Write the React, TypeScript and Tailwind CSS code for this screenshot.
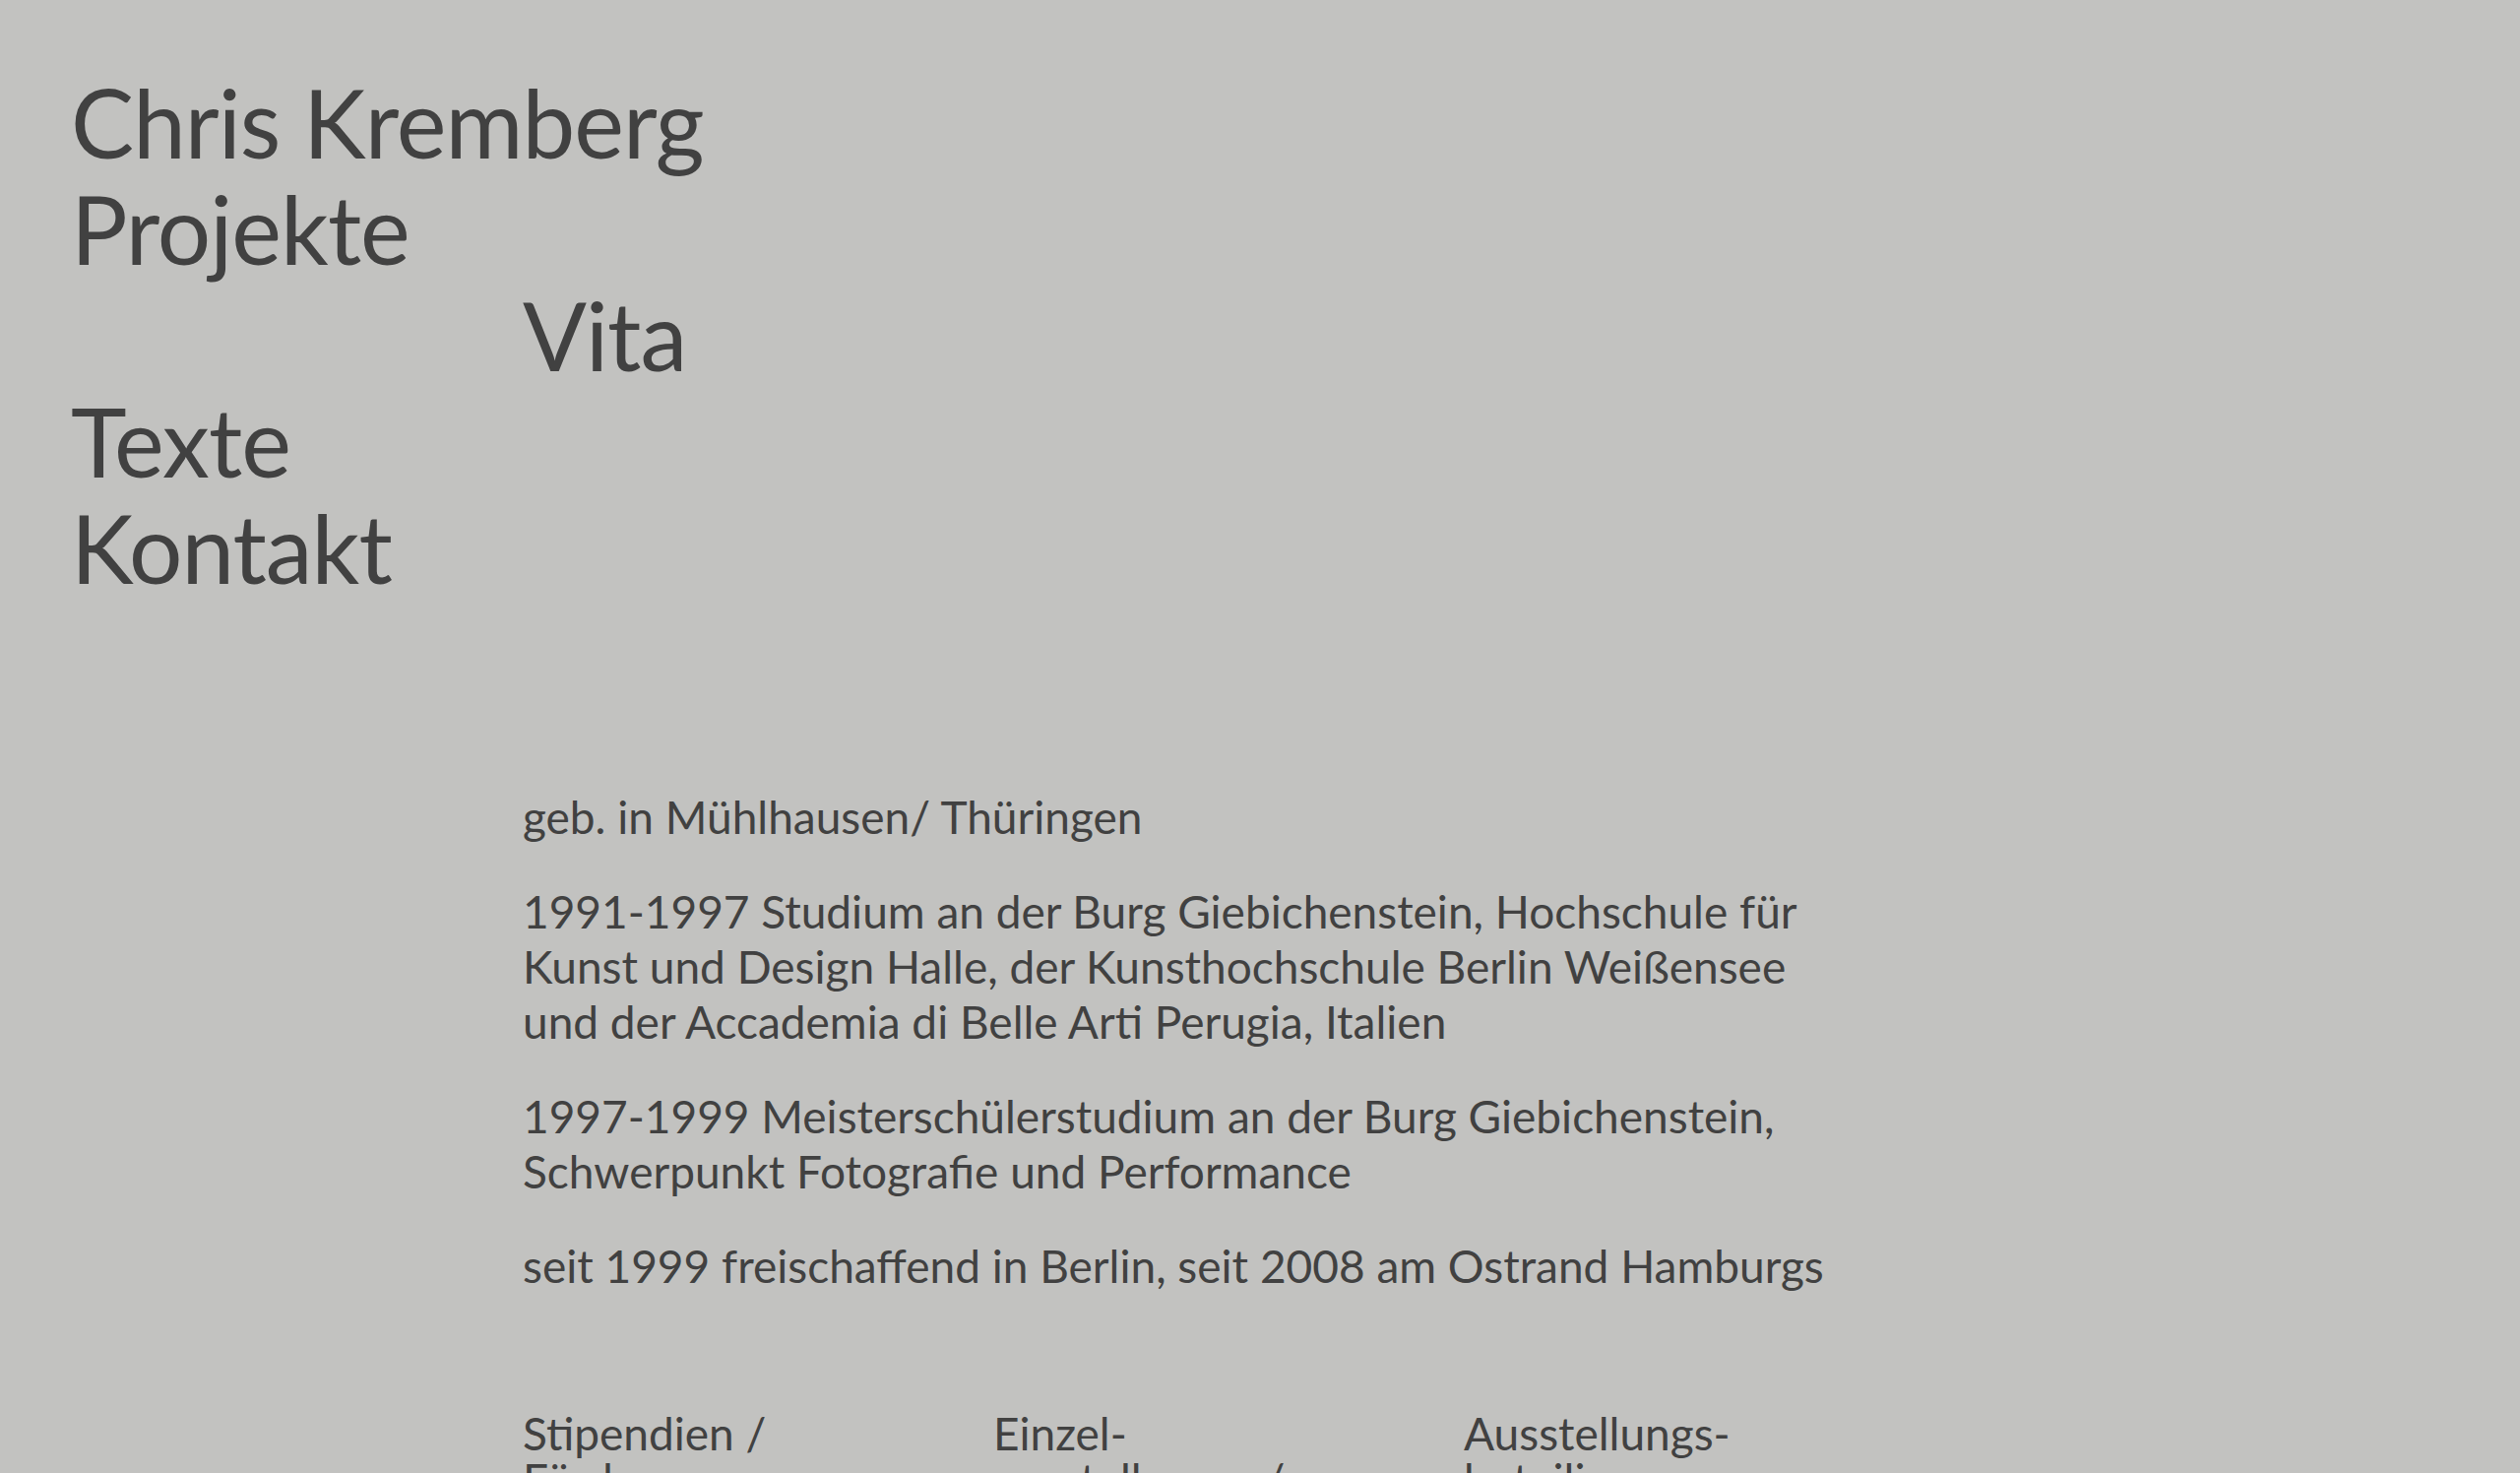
export default function App() {
  const nav = [
    { label: "Chris Kremberg", indent: false },
    { label: "Projekte", indent: false },
    { label: "Vita", indent: true },
    { label: "Texte", indent: false },
    { label: "Kontakt", indent: false },
  ];

  const paragraphs = [
    "geb. in Mühlhausen/ Thüringen",
    "1991-1997 Studium an der Burg Giebichenstein, Hochschule für Kunst und Design Halle, der Kunsthochschule Berlin Weißensee und der Accademia di Belle Arti Perugia, Italien",
    "1997-1999 Meisterschülerstudium an der Burg Giebichenstein, Schwerpunkt Fotografie und Performance",
    "seit 1999 freischaffend in Berlin, seit 2008 am Ostrand Hamburgs",
  ];

  const columns = [
    "Stipendien / Förderungen",
    "Einzel- ausstellungen/ Projekte",
    "Ausstellungs- beteiligungen",
  ];

  return (
    <div className="min-h-screen h-[1496px] overflow-hidden bg-[#c2c2c0] text-[#414141] font-['Lato',sans-serif] pl-[72px] pt-[70px]">
      {/* Navigation */}
      <nav className="flex flex-col text-[96px] leading-[108px] tracking-[-0.01em]">
        {nav.map((item) => (
          <a
            key={item.label}
            className={item.indent ? "pl-[459px]" : ""}
          >
            {item.label}
          </a>
        ))}
      </nav>

      {/* Vita */}
      <section className="ml-[459px] mt-[192px] w-[1350px]">
        <div className="flex flex-col gap-[40px] text-[46px] leading-[56px]">
          {paragraphs.map((p) => (
            <p key={p}>{p}</p>
          ))}
        </div>

        <div className="mt-[118px] grid grid-cols-[478px_478px_478px] text-[46px] leading-[47px]">
          {columns.map((c) => (
            <h2 key={c} className="w-[300px]">
              {c}
            </h2>
          ))}
        </div>
      </section>
    </div>
  );
}
